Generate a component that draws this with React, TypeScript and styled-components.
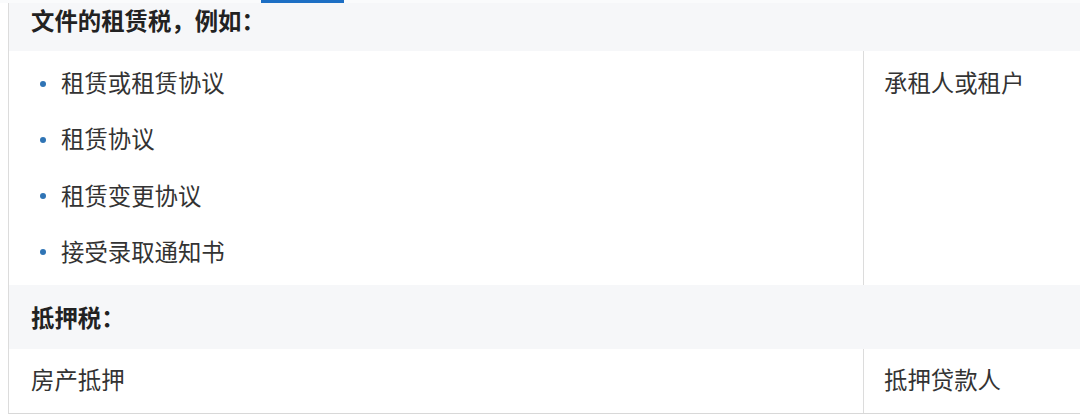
import React from 'react';
import styled, { createGlobalStyle } from 'styled-components';

const GlobalStyle = createGlobalStyle`
  html, body {
    margin: 0;
    padding: 0;
    background: #ffffff;
    overflow: hidden;
  }
  body {
    font-family: "Noto Sans CJK SC", "Noto Sans", sans-serif;
    color: #333333;
  }
`;

const Page = styled.div`
  width: 1080px;
  height: 419px;
  overflow: hidden;
  display: flex;
  flex-direction: column;
`;

const TopStrip = styled.div`
  height: 3px;
  flex-shrink: 0;
  background: #fafbfc;
  display: flex;
`;

const TabIndicator = styled.div`
  margin-left: 261px;
  width: 83px;
  height: 3px;
  background: #1d6fc4;
`;

const Table = styled.div`
  margin-left: 8px;
  width: 1120px;
  border-left: 1px solid #dcdcdc;
  border-bottom: 1px solid #d8d8d8;
  display: grid;
  grid-template-columns: 854px 1fr;
`;

const HeaderCell = styled.div<{ $pt: number; $pb: number }>`
  grid-column: 1 / span 2;
  background: #f6f7f9;
  padding: ${(p) => p.$pt}px 22px ${(p) => p.$pb}px;
  font-size: 23.4px;
  line-height: 34px;
  font-weight: 700;
  color: #222222;
`;

const Cell = styled.div<{ $pt: number; $pb: number; $divider?: boolean }>`
  padding: ${(p) => p.$pt}px 20px ${(p) => p.$pb}px ${(p) => (p.$divider ? 20 : 22)}px;
  font-size: 23.4px;
  line-height: 34px;
  color: #333333;
  border-left: ${(p) => (p.$divider ? '1px solid #dcdcdc' : 'none')};
`;

const BulletList = styled.ul`
  list-style: none;
  margin: 0;
  padding: 0;
  display: flex;
  flex-direction: column;
  gap: 22.3px;
`;

const BulletItem = styled.li`
  display: flex;
  align-items: center;
  gap: 15px;
  padding-left: 9px;

  &::before {
    content: '';
    width: 6px;
    height: 6px;
    border-radius: 50%;
    background: #2f74b5;
    flex-shrink: 0;
    margin-top: 3px;
  }
`;

const leaseDocs = ['租赁或租赁协议', '租赁协议', '租赁变更协议', '接受录取通知书'];

export default function App() {
  return (
    <Page>
      <GlobalStyle />
      <TopStrip>
        <TabIndicator />
      </TopStrip>
      <Table>
        <HeaderCell $pt={0} $pb={14}>文件的租赁税，例如：</HeaderCell>
        <Cell $pt={14} $pb={17}>
          <BulletList>
            {leaseDocs.map((d) => (
              <BulletItem key={d}>{d}</BulletItem>
            ))}
          </BulletList>
        </Cell>
        <Cell $pt={14} $pb={17} $divider>承租人或租户</Cell>
        <HeaderCell $pt={15} $pb={15}>抵押税：</HeaderCell>
        <Cell $pt={13} $pb={17}>房产抵押</Cell>
        <Cell $pt={13} $pb={17} $divider>抵押贷款人</Cell>
      </Table>
    </Page>
  );
}
